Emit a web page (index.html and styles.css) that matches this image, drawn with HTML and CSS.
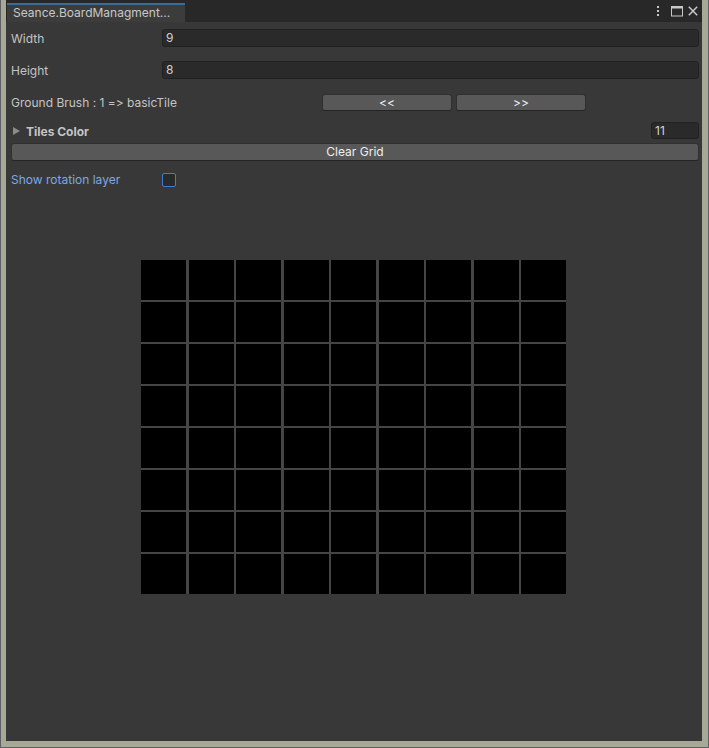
FILE: index.html
```html
<!DOCTYPE html>
<html>
<head>
<meta charset="utf-8">
<link rel="stylesheet" href="styles.css">
</head>
<body>
<div class="frame">
  <div class="panel">
    <div class="titlebar">
      <div class="tab">Seance.BoardManagment...</div>
      <div class="tb-icons">
        <svg class="ic kebab" width="4" height="12" viewBox="0 0 4 12"><rect x="1" y="1" width="2" height="2" fill="#c8c8c8"/><rect x="1" y="5" width="2" height="2" fill="#c8c8c8"/><rect x="1" y="9" width="2" height="2" fill="#c8c8c8"/></svg>
        <svg class="ic maxi" width="12" height="12" viewBox="0 0 12 12"><rect x="0.5" y="1.5" width="11" height="9.5" fill="none" stroke="#c8c8c8" stroke-width="1"/><rect x="0.5" y="1.5" width="11" height="2" fill="#c8c8c8"/></svg>
        <svg class="ic close" width="10" height="12" viewBox="0 0 10 12"><path d="M0.8 1.8 L9.2 10.2 M9.2 1.8 L0.8 10.2" stroke="#c8c8c8" stroke-width="1.5"/></svg>
      </div>
    </div>
    <div class="content">
      <div class="row r-width">
        <div class="label">Width</div>
        <div class="field grow">9</div>
      </div>
      <div class="row r-height">
        <div class="label">Height</div>
        <div class="field grow">8</div>
      </div>
      <div class="row r-brush">
        <div class="label brush-label">Ground Brush : 1 =&gt; basicTile</div>
        <div class="btn nav">&lt;&lt;</div>
        <div class="btn nav">&gt;&gt;</div>
      </div>
      <div class="row r-fold">
        <div class="fold"><span class="tri"></span><span class="fold-text">Tiles Color</span></div>
        <div class="field small">11</div>
      </div>
      <div class="row r-clear">
        <div class="btn wide">Clear Grid</div>
      </div>
      <div class="row r-check">
        <div class="label link">Show rotation layer</div>
        <div class="checkbox"></div>
      </div>
      <div class="grid-wrap">
        <div class="grid">
          <div class="cell"></div><div class="cell"></div><div class="cell"></div><div class="cell"></div><div class="cell"></div><div class="cell"></div><div class="cell"></div><div class="cell"></div><div class="cell"></div>
          <div class="cell"></div><div class="cell"></div><div class="cell"></div><div class="cell"></div><div class="cell"></div><div class="cell"></div><div class="cell"></div><div class="cell"></div><div class="cell"></div>
          <div class="cell"></div><div class="cell"></div><div class="cell"></div><div class="cell"></div><div class="cell"></div><div class="cell"></div><div class="cell"></div><div class="cell"></div><div class="cell"></div>
          <div class="cell"></div><div class="cell"></div><div class="cell"></div><div class="cell"></div><div class="cell"></div><div class="cell"></div><div class="cell"></div><div class="cell"></div><div class="cell"></div>
          <div class="cell"></div><div class="cell"></div><div class="cell"></div><div class="cell"></div><div class="cell"></div><div class="cell"></div><div class="cell"></div><div class="cell"></div><div class="cell"></div>
          <div class="cell"></div><div class="cell"></div><div class="cell"></div><div class="cell"></div><div class="cell"></div><div class="cell"></div><div class="cell"></div><div class="cell"></div><div class="cell"></div>
          <div class="cell"></div><div class="cell"></div><div class="cell"></div><div class="cell"></div><div class="cell"></div><div class="cell"></div><div class="cell"></div><div class="cell"></div><div class="cell"></div>
          <div class="cell"></div><div class="cell"></div><div class="cell"></div><div class="cell"></div><div class="cell"></div><div class="cell"></div><div class="cell"></div><div class="cell"></div><div class="cell"></div>
        </div>
      </div>
    </div>
  </div>
</div>
</body>
</html>
```

FILE: styles.css
```css
* { box-sizing: border-box; }
html, body {
  margin: 0;
  padding: 0;
  width: 709px;
  height: 748px;
  overflow: hidden;
  background: #a7a895;
  font-family: Inter, "Noto Sans", sans-serif;
  font-size: 12px;
  color: #c4c4c4;
  font-variant-ligatures: none;
  font-feature-settings: "calt" 0, "liga" 0;
}
.frame {
  width: 709px;
  height: 748px;
  background: #a7a895;
  border-left: 1px solid #5d6166;
  border-right: 1px solid #5d6166;
  border-bottom: 1px solid #5d6166;
  padding: 0 6px 6px 5px;
  display: flex;
}
.panel {
  flex: 1;
  background: #383838;
  display: flex;
  flex-direction: column;
}
.titlebar {
  height: 22px;
  background: #282828;
  display: flex;
  align-items: flex-start;
  flex: 0 0 22px;
}
.tab {
  margin-left: 1px;
  margin-top: 3px;
  width: 178px;
  height: 19px;
  background: #3c3c3c;
  border-top: 2px solid #3b6c98;
  padding-left: 6px;
  line-height: 16px;
  color: #c8c8c8;
  font-size: 12px;
  white-space: nowrap;
}
.tb-icons {
  margin-left: auto;
  margin-right: 4px;
  margin-top: 5px;
  display: flex;
}
.ic { display: block; }
.kebab { margin-right: 11px; }
.maxi { margin-right: 5px; }
.content {
  padding: 7px 3px 0 5px;
  display: flex;
  flex-direction: column;
}
.row {
  display: flex;
  align-items: center;
}
.label {
  flex: 0 0 151px;
  white-space: nowrap;
}
.field {
  height: 18px;
  background: #2a2a2a;
  border: 1px solid #212121;
  border-radius: 3px;
  padding-left: 3px;
  line-height: 16px;
  color: #d2d2d2;
}
.grow { flex: 1; }
.r-width { height: 18px; }
.r-height { height: 18px; margin-top: 14px; }
.r-brush { height: 17px; margin-top: 15px; }
.brush-label { flex: 0 0 311px; }
.btn {
  height: 17px;
  background: #585858;
  border: 1px solid #303030;
  border-bottom-color: #242424;
  border-radius: 3px;
  color: #eeeeee;
  text-align: center;
  line-height: 15px;
  white-space: nowrap;
}
.nav { width: 130px; }
.nav + .nav { margin-left: 4px; }
.r-fold { height: 17px; margin-top: 11px; justify-content: space-between; }
.fold { display: flex; align-items: center; padding-top: 1px; }
.tri {
  width: 0;
  height: 0;
  border-top: 4px solid transparent;
  border-bottom: 4px solid transparent;
  border-left: 7px solid #8b8b8b;
  margin-left: 2px;
  margin-right: 6px;
}
.fold-text { font-weight: 700; color: #c4c4c4; }
.field.small {
  width: 48px;
  height: 17px;
  line-height: 15px;
  margin-right: 0;
}
.r-clear { margin-top: 4px; }
.wide { flex: 1; height: 18px; line-height: 16px; }
.r-check { height: 14px; margin-top: 12px; }
.link { color: #79a9e6; margin-top: -1px; }
.checkbox {
  width: 14px;
  height: 14px;
  border: 1px solid #3f7ccc;
  border-radius: 2px;
  background: #2a2a2a;
}
.grid-wrap {
  margin-top: 73px;
  padding-left: 130px;
  display: flex;
}
.grid {
  width: 425px;
  height: 334px;
  display: grid;
  grid-template-columns: repeat(9, 1fr);
  grid-template-rows: repeat(8, 1fr);
  column-gap: 2.5px;
  row-gap: 2px;
  background: #454545;
}
.cell { background: #000; }
```
